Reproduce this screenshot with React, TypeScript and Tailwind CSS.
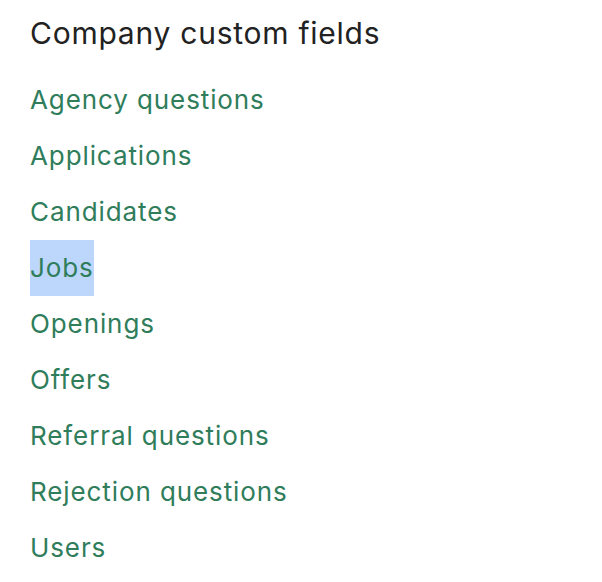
const fields = [
  'Agency questions',
  'Applications',
  'Candidates',
  'Jobs',
  'Openings',
  'Offers',
  'Referral questions',
  'Rejection questions',
  'Users',
]

export default function App() {
  return (
    <div className="min-h-screen bg-white px-[30px] font-['Inter',sans-serif]">
      <h1 className="h-[72px] pt-[14px] text-[30px] leading-[38px] tracking-[0.75px] text-[#222222]">
        Company custom fields
      </h1>
      <ul className="flex flex-col">
        {fields.map((f) => (
          <li key={f} className="h-[56px]">
            <a
              href="#"
              className={
                'inline-block text-[26px] leading-[56px] tracking-[0.9px] text-[#2f7d5b] ' +
                (f === 'Jobs' ? 'bg-[#bcd7fb]' : '')
              }
            >
              {f}
            </a>
          </li>
        ))}
      </ul>
    </div>
  )
}
